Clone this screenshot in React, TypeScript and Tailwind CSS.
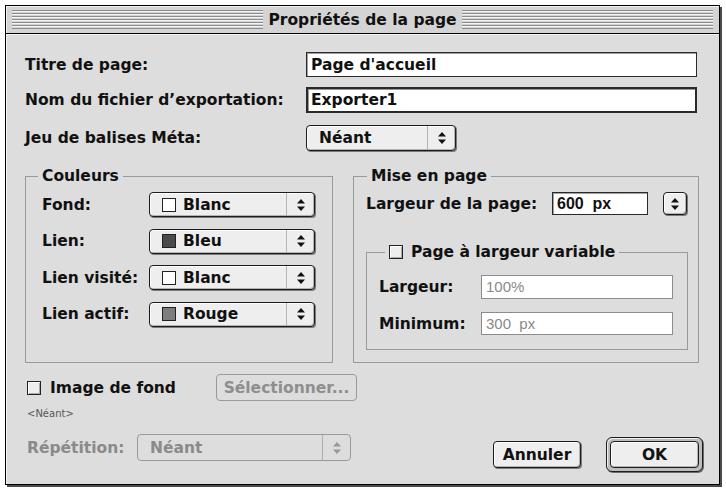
import React from 'react';

/**
 * Mac OS 8 style "Propriétés de la page" dialog.
 */

const FONT = "font-['DejaVu_Sans',sans-serif]";

const Arrows: React.FC<{ color?: string }> = ({ color = '#111' }) => (
  <svg width="8" height="12" viewBox="0 0 8 12">
    <polygon points="4,0 8,4.5 0,4.5" fill={color} />
    <polygon points="0,7.5 8,7.5 4,12" fill={color} />
  </svg>
);

const Swatch: React.FC<{ fill: string }> = ({ fill }) => (
  <span className="inline-block w-[14px] h-[14px] border border-[#222]" style={{ background: fill }} />
);

const Popup: React.FC<{
  children: React.ReactNode;
  className?: string;
  disabled?: boolean;
}> = ({ children, className = '', disabled }) => (
  <div
    className={`flex items-stretch rounded-[4px] border ${
      disabled
        ? 'border-[#9a9a9a] text-[#8a8a8a]'
        : 'border-[#1c1c1c] bg-[#eeeeee] shadow-[1px_1px_0_#7a7a7a,inset_1px_1px_0_#ffffff,inset_-1px_-1px_0_#b4b4b4]'
    } ${className}`}
  >
    <div className="flex-1 flex items-center gap-[7px] pl-[12px]">{children}</div>
    <div
      className={`w-[28px] flex items-center justify-center border-l ${
        disabled ? 'border-[#b0b0b0]' : 'border-[#b4b4b4]'
      }`}
    >
      <Arrows color={disabled ? '#9a9a9a' : '#111'} />
    </div>
  </div>
);

const TextField: React.FC<{
  value: string;
  className?: string;
  focused?: boolean;
  disabled?: boolean;
}> = ({ value, className = '', focused, disabled }) => (
  <div
    className={`flex items-center bg-white ${
      focused
        ? 'border-2 border-[#2a2a2a] shadow-[inset_1px_1px_0_#9a9a9a] pl-[3px]'
        : disabled
        ? 'border border-[#8c8c8c] pl-[4px]'
        : 'border border-[#2a2a2a] shadow-[inset_1px_1px_0_#a0a0a0] pl-[4px]'
    } ${className}`}
  >
    {value}
  </div>
);

const Checkbox: React.FC = () => (
  <span className="inline-block w-[14px] h-[14px] border border-[#222] bg-[#eeeeee] shadow-[inset_1px_1px_0_#ffffff,inset_-1px_-1px_0_#aaaaaa]" />
);

const Stripes: React.FC = () => (
  <div className="flex-1 h-[19px] bg-[repeating-linear-gradient(to_bottom,#8c8c8c_0px,#8c8c8c_1px,#f4f4f4_1px,#f4f4f4_2px,#d4d4d4_2px,#d4d4d4_3px)]" />
);

const COLOR_ROWS = [
  { label: 'Fond:', swatch: '#ffffff', name: 'Blanc' },
  { label: 'Lien:', swatch: '#4b4b4b', name: 'Bleu' },
  { label: 'Lien visité:', swatch: '#ffffff', name: 'Blanc' },
  { label: 'Lien actif:', swatch: '#7d7d7d', name: 'Rouge' },
];

export default function App() {
  return (
    <div className={`w-[726px] h-[490px] bg-white pl-[5px] pt-[5px] ${FONT} font-bold text-[15.5px] leading-[18px] text-[#111]`}>
      <div className="w-[715px] h-[480px] border border-black bg-[#dddddd] shadow-[2px_2px_0_#4a4a4a] flex flex-col">
        {/* Title bar */}
        <div className="h-[28px] border-b border-black bg-[#d4d4d4] shadow-[inset_1px_1px_0_#f2f2f2] flex items-center px-[6px] gap-[5px]">
          <Stripes />
          <span>Propriétés de la page</span>
          <Stripes />
        </div>

        {/* Body */}
        <div className="flex-1 flex flex-col pl-[19px] pr-[16px] pt-[18px] shadow-[inset_1px_1px_0_#f4f4f4]">
          <div className="flex items-center mr-[6px]">
            <span className="w-[281px]">Titre de page:</span>
            <TextField value="Page d'accueil" className="flex-1 h-[25px]" />
          </div>
          <div className="flex items-center mr-[6px] mt-[10px]">
            <span className="w-[281px]">Nom du fichier d’exportation:</span>
            <TextField value="Exporter1" focused className="flex-1 h-[26px]" />
          </div>
          <div className="flex items-center mt-[12px]">
            <span className="w-[281px]">Jeu de balises Méta:</span>
            <Popup className="w-[150px] h-[26px]">Néant</Popup>
          </div>

          {/* Groups */}
          <div className="flex mt-[16px] mr-[4px] gap-[20px]">
            <fieldset className="w-[308px] h-[196px] border border-[#9a9a9a] pl-[16px] pr-[16px]">
              <legend className="-ml-[4px] px-[4px] h-[18px]">Couleurs</legend>
              <div className="flex flex-col gap-[11.5px] pt-[7px]">
                {COLOR_ROWS.map((r) => (
                  <div key={r.label} className="flex items-center">
                    <span className="w-[107px]">{r.label}</span>
                    <Popup className="w-[166px] h-[25px]">
                      <Swatch fill={r.swatch} />
                      {r.name}
                    </Popup>
                  </div>
                ))}
              </div>
            </fieldset>

            <fieldset className="flex-1 h-[196px] border border-[#9a9a9a] pl-[12px] pr-[10px]">
              <legend className="ml-[1px] px-[4px] h-[18px]">Mise en page</legend>
              <div className="flex items-center pt-[7px]">
                <span className="w-[186px]">Largeur de la page:</span>
                <TextField
                  value="600  px"
                  className="w-[96px] h-[23px] whitespace-pre font-['Liberation_Sans',sans-serif] text-[16px]"
                />
                <div className="ml-[15px] w-[24px] h-[23px] rounded-[4px] border border-[#1c1c1c] bg-[#eeeeee] shadow-[1px_1px_0_#7a7a7a,inset_1px_1px_0_#ffffff,inset_-1px_-1px_0_#b4b4b4] flex items-center justify-center">
                  <Arrows />
                </div>
              </div>

              <fieldset className="mt-[28px] h-[107px] border border-[#9a9a9a] pl-[12px] pr-[14px]">
                <legend className="ml-[6px] px-[4px] h-[18px] flex items-center gap-[8px]">
                  <Checkbox />
                  Page à largeur variable
                </legend>
                <div className="flex flex-col gap-[13px] pt-[14px]">
                  <div className="flex items-center">
                    <span className="w-[102px]">Largeur:</span>
                    <TextField
                      value="100%"
                      disabled
                      className="flex-1 h-[24px] font-['Liberation_Sans',sans-serif] font-normal text-[15px] text-[#8a8a8a]"
                    />
                  </div>
                  <div className="flex items-center">
                    <span className="w-[102px]">Minimum:</span>
                    <TextField
                      value="300  px"
                      disabled
                      className="flex-1 h-[23px] whitespace-pre font-['Liberation_Sans',sans-serif] font-normal text-[15px] text-[#8a8a8a]"
                    />
                  </div>
                </div>
              </fieldset>
            </fieldset>
          </div>

          {/* Bottom */}
          <div className="flex items-end justify-between">
            <div className="flex flex-col pl-[2px] mb-[10px]">
              <div className="flex items-center mt-[11px]">
                <Checkbox />
                <span className="ml-[9px] w-[166px]">Image de fond</span>
                <div className="w-[141px] h-[27px] rounded-[4px] border border-[#9a9a9a] flex items-center justify-center text-[#8e8e8e]">
                  Sélectionner...
                </div>
              </div>
              <div className="mt-[7px] text-[10px] leading-[12px] font-normal text-[#555]">&lt;Néant&gt;</div>
              <div className="flex items-center mt-[14px]">
                <span className="w-[110px] text-[#8a8a8a]">Répétition:</span>
                <Popup disabled className="w-[214px] h-[27px]">
                  Néant
                </Popup>
              </div>
            </div>

            <div className="flex items-center gap-[25px] mb-[-1px]">
              <div className="w-[88px] h-[27px] rounded-[4px] border border-[#1c1c1c] bg-[#eeeeee] shadow-[1px_1px_0_#7a7a7a,inset_1px_1px_0_#ffffff,inset_-1px_-1px_0_#b4b4b4] flex items-center justify-center">
                Annuler
              </div>
              <div className="w-[97px] h-[35px] rounded-[6px] border border-[#1c1c1c] bg-[#bdbdbd] shadow-[1px_1px_0_#6a6a6a,inset_1px_1px_0_#eeeeee] p-[3px]">
                <div className="w-full h-full rounded-[4px] border border-[#1c1c1c] bg-[#eeeeee] shadow-[inset_1px_1px_0_#ffffff,inset_-1px_-1px_0_#b4b4b4] flex items-center justify-center">
                  OK
                </div>
              </div>
            </div>
          </div>
        </div>
      </div>
    </div>
  );
}
